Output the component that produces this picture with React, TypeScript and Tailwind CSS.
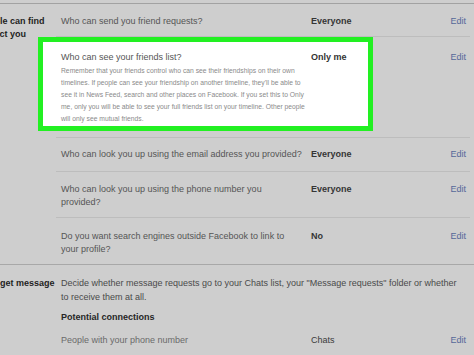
import React from "react";

const Q = "text-[9px] leading-[12.5px] text-[#555555]";
const V = "text-[9px] leading-[12px] font-bold text-[#353535]";
const E = "text-[9px] leading-[12px] text-[#546899]";

function Row({
  h,
  pt,
  q,
  v,
  last,
}: {
  h: string;
  pt: string;
  q: React.ReactNode;
  v: string;
  last?: boolean;
}) {
  return (
    <div
      className={`flex items-start pl-[5px] pr-[4px] ${h} ${pt} ${
        last ? "" : "border-b border-[#bdbdbd]"
      }`}
    >
      <div className={`w-[250px] shrink-0 ${Q}`}>{q}</div>
      <div className={`flex-1 ${V}`}>{v}</div>
      <div className={E}>Edit</div>
    </div>
  );
}

export default function App() {
  return (
    <div className="relative w-[474px] h-[355px] overflow-hidden bg-[#cecece] font-['Liberation_Sans',Arial,sans-serif]">
      <div className="h-[3px]" />
      <div className="h-px bg-[#a2a2a2]" />

      {/* Section 1 */}
      <div className="flex border-b border-[#a8a8a8]">
        <div className="w-[56px] shrink-0 overflow-hidden pt-[11px]">
          <div className="ml-[-43px] whitespace-nowrap text-[9px] leading-[13px] font-bold text-[#1e1e1e]">
            How people can find
            <br />
            and contact you
          </div>
        </div>
        <div className="w-[414px] shrink-0">
          <Row
            h="h-[33px]"
            pt="pt-[11px]"
            q="Who can send you friend requests?"
            v="Everyone"
          />

          {/* Highlighted row */}
          <div className="flex items-start h-[101px] border-b border-[#bdbdbd] pr-[4px]">
            <div className="ml-[-18px] w-[335px] h-[94px] shrink-0 border-[5px] border-[#22f022] bg-white pl-[18px] pt-[9px]">
              <div className="flex">
                <div className="w-[250px] shrink-0 text-[9px] leading-[12px] text-[#555555]">
                  Who can see your friends list?
                </div>
                <div className="text-[9px] leading-[12px] font-bold text-[#333333]">
                  Only me
                </div>
              </div>
              <div className="mt-[2px] text-[6.75px] leading-[12px] text-[#8a8a8a] whitespace-nowrap">
                <div>
                  Remember that your friends control who can see their friendships on their own
                </div>
                <div>
                  timelines. If people can see your friendship on another timeline, they'll be able to
                </div>
                <div>
                  see it in News Feed, search and other places on Facebook. If you set this to Only
                </div>
                <div>
                  me, only you will be able to see your full friends list on your timeline. Other people
                </div>
                <div>will only see mutual friends.</div>
              </div>
            </div>
            <div className={`ml-auto pt-[14px] ${E}`}>Edit</div>
          </div>

          <Row
            h="h-[34px]"
            pt="pt-[10px]"
            q="Who can look you up using the email address you provided?"
            v="Everyone"
          />
          <Row
            h="h-[46px]"
            pt="pt-[11px]"
            q={
              <>
                Who can look you up using the phone number you
                <br />
                provided?
              </>
            }
            v="Everyone"
          />
          <Row
            h="h-[46px]"
            pt="pt-[12px]"
            q={
              <>
                Do you want search engines outside Facebook to link to
                <br />
                your profile?
              </>
            }
            v="No"
            last
          />
        </div>
      </div>

      {/* Section 2 */}
      <div className="flex">
        <div className="w-[56px] shrink-0 overflow-hidden pt-[12px]">
          <div className="ml-[-40px] whitespace-nowrap text-[9px] leading-[12px] font-bold text-[#1e1e1e]">
            How you get message
          </div>
        </div>
        <div className="w-[414px] shrink-0 pl-[5px] pr-[4px] pt-[11px]">
          <div className="text-[9px] leading-[14px] text-[#4a4a4a] whitespace-nowrap">
            Decide whether message requests go to your Chats list, your "Message requests" folder or whether
            <br />
            to receive them at all.
          </div>
          <div className="mt-[7px] text-[9px] leading-[12px] font-bold text-[#262626]">
            Potential connections
          </div>
          <div className="mt-[11px] flex items-start">
            <div className="w-[250px] shrink-0 text-[9px] leading-[12px] text-[#6a6a6a]">
              People with your phone number
            </div>
            <div className="flex-1 text-[9px] leading-[12px] text-[#3a3a3a]">Chats</div>
            <div className={E}>Edit</div>
          </div>
        </div>
      </div>
    </div>
  );
}
